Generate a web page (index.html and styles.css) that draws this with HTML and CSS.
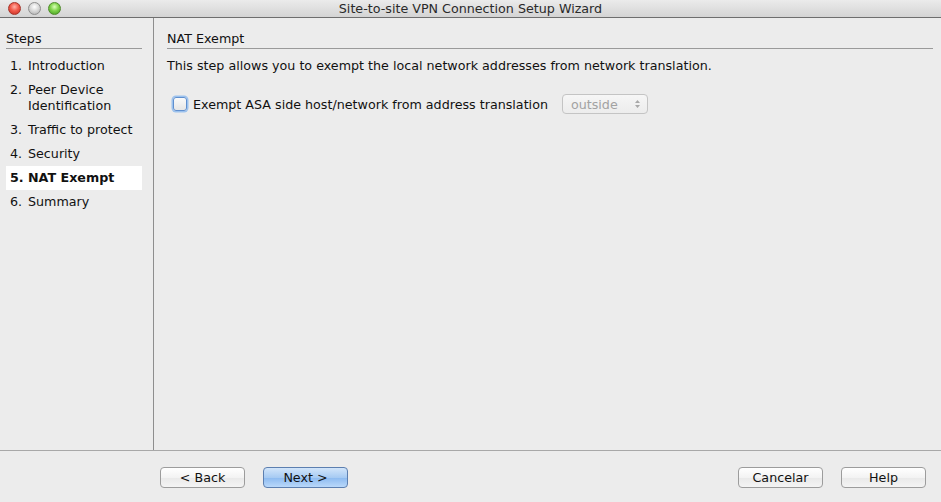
FILE: index.html
```html
<!DOCTYPE html>
<html>
<head>
<meta charset="utf-8">
<title>Site-to-site VPN Connection Setup Wizard</title>
<link rel="stylesheet" href="styles.css">
</head>
<body>
<div class="window">
  <div class="titlebar">
    <div class="lights">
      <span class="light red"></span>
      <span class="light gray"></span>
      <span class="light green"></span>
    </div>
    <div class="title">Site-to-site VPN Connection Setup Wizard</div>
  </div>
  <div class="main">
    <aside class="steps">
      <div class="section-head">Steps</div>
      <ol class="step-list">
        <li class="step"><span class="num">1.</span><span class="lbl">Introduction</span></li>
        <li class="step"><span class="num">2.</span><span class="lbl">Peer Device<br>Identification</span></li>
        <li class="step"><span class="num">3.</span><span class="lbl">Traffic to protect</span></li>
        <li class="step"><span class="num">4.</span><span class="lbl">Security</span></li>
        <li class="step active"><span class="num">5.</span><span class="lbl">NAT Exempt</span></li>
        <li class="step"><span class="num">6.</span><span class="lbl">Summary</span></li>
      </ol>
    </aside>
    <section class="content">
      <div class="section-head">NAT Exempt</div>
      <p class="desc">This step allows you to exempt the local network addresses from network translation.</p>
      <div class="option-row">
        <label class="check">
          <span class="box"></span>
          <span>Exempt ASA side host/network from address translation</span>
        </label>
        <div class="select disabled">
          <span>outside</span>
          <svg class="updown" width="7" height="10" viewBox="0 0 7 10"><path d="M3.5 1 L6 4 H1 Z M3.5 9 L6 6 H1 Z" fill="#a8a8a8"/></svg>
        </div>
      </div>
    </section>
  </div>
  <div class="footer">
    <div class="btn-group">
      <button class="btn">&lt; Back</button>
      <button class="btn primary">Next &gt;</button>
    </div>
    <div class="btn-group">
      <button class="btn">Cancelar</button>
      <button class="btn">Help</button>
    </div>
  </div>
</div>
</body>
</html>
```

FILE: styles.css
```css
* { box-sizing: border-box; }
html, body { margin: 0; padding: 0; }
body {
  width: 941px;
  height: 502px;
  overflow: hidden;
  background: #ececec;
  font-family: "DejaVu Sans", "Liberation Sans", sans-serif;
  font-size: 12.7px;
  color: #111;
}
.window {
  display: flex;
  flex-direction: column;
  height: 502px;
}
.titlebar {
  position: relative;
  height: 18px;
  flex: none;
  background: linear-gradient(#ebebeb, #d4d4d4);
  border-bottom: 1px solid #6e6e6e;
  display: flex;
  align-items: center;
  justify-content: center;
}
.lights {
  position: absolute;
  left: 8px;
  top: 2px;
  display: flex;
  gap: 7px;
}
.light {
  width: 13px;
  height: 13px;
  border-radius: 50%;
  display: block;
}
.light.red {
  background: radial-gradient(circle at 50% 35%, #ffb3a8 0%, #f25a4a 45%, #c22b1f 100%);
  border: 1px solid #a5342a;
}
.light.gray {
  background: radial-gradient(circle at 50% 35%, #ffffff 0%, #d6d6d6 50%, #a9a9a9 100%);
  border: 1px solid #8f8f8f;
}
.light.green {
  background: radial-gradient(circle at 50% 35%, #dbffb8 0%, #7fd34a 45%, #3f9a1d 100%);
  border: 1px solid #4f8a2a;
}
.title {
  font-size: 12.7px;
  color: #2a2a2a;
  line-height: 16px;
}
.main {
  flex: 1;
  display: flex;
  border-bottom: 1px solid #a8a8a8;
}
.steps {
  width: 154px;
  flex: none;
  border-right: 1px solid #8e8e8e;
  padding: 11px 11px 0 6px;
}
.section-head {
  height: 20px;
  line-height: 20px;
  border-bottom: 1px solid #9a9a9a;
  color: #111;
}
.step-list {
  list-style: none;
  margin: 5px 0 0;
  padding: 0;
}
.step {
  display: flex;
  padding: 4px 0 4px 4px;
  line-height: 16px;
}
.step .num {
  width: 18px;
  flex: none;
}
.step.active {
  background: #fff;
  font-weight: bold;
}
.content {
  flex: 1;
  padding: 11px 8px 0 13px;
}
.desc {
  margin: 9px 0 0;
  line-height: 16px;
}
.option-row {
  display: flex;
  align-items: center;
  margin-top: 20px;
  padding-left: 6px;
}
.check {
  display: flex;
  align-items: center;
  gap: 6px;
}
.box {
  width: 14px;
  height: 14px;
  border-radius: 3px;
  border: 1px solid #5f8fcf;
  background: linear-gradient(#fafafa, #e6e6e6);
  box-shadow: 0 0 0 1.5px #9cc2ee;
  display: block;
}
.select {
  margin-left: 14px;
  width: 86px;
  height: 20px;
  border: 1px solid #c4c4c4;
  border-radius: 4px;
  background: linear-gradient(#f6f6f6, #ececec);
  display: flex;
  align-items: center;
  justify-content: space-between;
  padding: 0 6px 0 8px;
  color: #a2a2a2;
}
.footer {
  height: 51px;
  flex: none;
  display: flex;
  justify-content: space-between;
  align-items: flex-start;
  padding: 16px 15px 0 160px;
}
.btn-group {
  display: flex;
  gap: 18px;
}
.btn {
  width: 85px;
  height: 21px;
  font-family: inherit;
  font-size: 12.7px;
  color: #111;
  border: 1px solid #9c9c9c;
  border-radius: 4px;
  background: linear-gradient(#ffffff, #f3f3f3 50%, #e9e9e9 51%, #f4f4f4);
  padding: 0;
  line-height: 19px;
}
.btn.primary {
  border-color: #5c7fb0;
  background: linear-gradient(#d2e5fa, #a7cbf3 50%, #8cbaf0 51%, #b9d8fa);
}
```
